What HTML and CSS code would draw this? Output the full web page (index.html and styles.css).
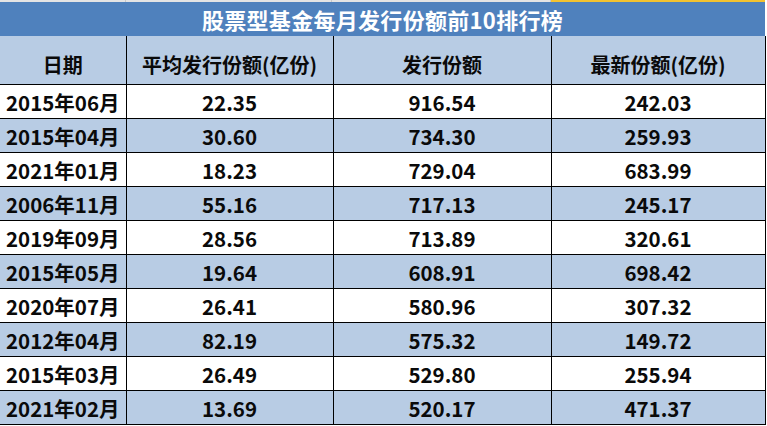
FILE: index.html
```html
<!DOCTYPE html>
<html lang="zh">
<head>
<meta charset="utf-8">
<link rel="stylesheet" href="styles.css">
</head>
<body>
<div class="sheet">
  <div class="strip">
    <div class="sc c1"></div>
    <div class="sc c2"></div>
    <div class="sc c3"></div>
    <div class="sc c4 sel"></div>
  </div>
  <div class="title">股票型基金每月发行份额前10排行榜</div>
  <table class="grid">
    <colgroup>
      <col class="w1"><col class="w2"><col class="w3"><col class="w4">
    </colgroup>
    <thead>
      <tr><th>日期</th><th>平均发行份额(亿份)</th><th>发行份额</th><th>最新份额(亿份)</th></tr>
    </thead>
    <tbody>
      <tr><td>2015年06月</td><td>22.35</td><td>916.54</td><td>242.03</td></tr>
      <tr class="alt"><td>2015年04月</td><td>30.60</td><td>734.30</td><td>259.93</td></tr>
      <tr><td>2021年01月</td><td>18.23</td><td>729.04</td><td>683.99</td></tr>
      <tr class="alt"><td>2006年11月</td><td>55.16</td><td>717.13</td><td>245.17</td></tr>
      <tr><td>2019年09月</td><td>28.56</td><td>713.89</td><td>320.61</td></tr>
      <tr class="alt"><td>2015年05月</td><td>19.64</td><td>608.91</td><td>698.42</td></tr>
      <tr><td>2020年07月</td><td>26.41</td><td>580.96</td><td>307.32</td></tr>
      <tr class="alt"><td>2012年04月</td><td>82.19</td><td>575.32</td><td>149.72</td></tr>
      <tr><td>2015年03月</td><td>26.49</td><td>529.80</td><td>255.94</td></tr>
      <tr class="alt"><td>2021年02月</td><td>13.69</td><td>520.17</td><td>471.37</td></tr>
    </tbody>
  </table>
</div>
</body>
</html>
```
FILE: styles.css
```css
html, body {
  margin: 0;
  padding: 0;
  background: #ffffff;
}
body {
  font-family: "Noto Sans CJK SC", "Noto Sans", sans-serif;
  color: #0a0a0a;
  overflow: hidden;
}
.sheet {
  width: 765px;
}
.strip {
  display: flex;
  height: 2px;
  background: #e4e4e4;
}
.sc {
  border-right: 1px solid #c8c8c8;
  box-sizing: border-box;
}
.c1 { width: 126px; }
.c2 { width: 206px; }
.c3 { width: 219px; }
.c4 { flex: 1; border-right: none; }
.sel {
  background: #f2c230;
}
.title {
  height: 34px;
  background: #4f81bd;
  color: #ffffff;
  font-weight: bold;
  font-size: 22px;
  line-height: 34px;
  text-align: center;
  letter-spacing: 0.3px;
}
.grid {
  width: 765px;
  border-collapse: collapse;
  table-layout: fixed;
  font-weight: bold;
  font-size: 20.5px;
}
.w1 { width: 126px; }
.w2 { width: 207px; }
.w3 { width: 218px; }
.w4 { width: 214px; }
.grid th {
  height: 48px;
  background: #b8cce4;
  border: 1px solid #000000;
  border-top: none;
  border-left: none;
  font-weight: bold;
  font-size: 20px;
  text-align: center;
  vertical-align: bottom;
  padding: 0 0 7px 0;
  line-height: 24px;
  box-sizing: border-box;
}
.grid td {
  height: 33px;
  border: 1px solid #000000;
  border-left: none;
  text-align: center;
  padding: 2px 0 0 0;
  line-height: 31px;
  box-sizing: border-box;
}
.grid tr.alt td {
  background: #b8cce4;
}
```
